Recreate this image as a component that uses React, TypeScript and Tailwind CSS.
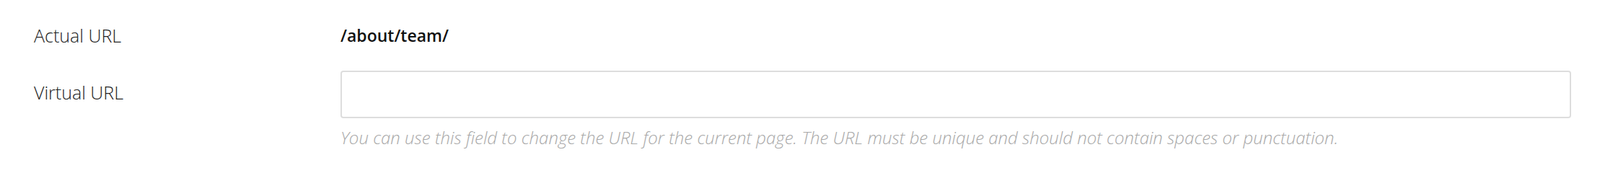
import React from "react";

export default function App() {
  return (
    <div className="w-[2218px] h-[232px] bg-white pl-[47px] pr-[40px] pt-[32px] font-['Open_Sans','Liberation_Sans',sans-serif]">
      <div className="grid grid-cols-[425px_1fr] items-center">
        <div className="text-[25px] leading-[34px] text-[#222] font-light">Actual URL</div>
        <div className="text-[23px] leading-[34px] text-[#111] font-semibold">/about/team/</div>
      </div>
      <div className="grid grid-cols-[425px_1fr] mt-[32px]">
        <div className="h-[62px] flex items-center text-[25px] text-[#222] font-light">Virtual URL</div>
        <div className="flex flex-col">
          <input
            type="text"
            className="h-[66px] w-full border-2 border-[#dddddd] rounded-[4px] bg-white outline-none px-3"
          />
          <p className="mt-[12px] text-[24px] leading-[30px] italic font-light text-[#a8a8a8]">
            You can use this field to change the URL for the current page. The URL must be unique and should not contain spaces or punctuation.
          </p>
        </div>
      </div>
    </div>
  );
}
